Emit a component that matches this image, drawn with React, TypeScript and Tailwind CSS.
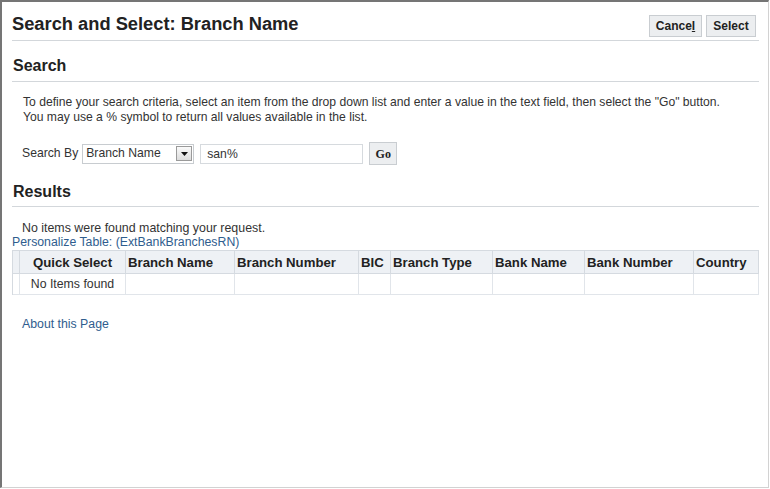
import React from "react";

const cols = [
  { label: "", w: "w-[7px]", center: false },
  { label: "Quick Select", w: "w-[106px]", center: true },
  { label: "Branch Name", w: "w-[109px]", center: false },
  { label: "Branch Number", w: "w-[124px]", center: false },
  { label: "BIC", w: "w-[32px]", center: false },
  { label: "Branch Type", w: "w-[102px]", center: false },
  { label: "Bank Name", w: "w-[92px]", center: false },
  { label: "Bank Number", w: "w-[109px]", center: false },
  { label: "Country", w: "w-[65px]", center: false },
];

export default function App() {
  return (
    <div
      className="w-[769px] h-[488px] bg-white border-t-2 border-l-2 border-t-[#757575] border-l-[#757575] border-r border-b border-r-[#d2d2d2] border-b-[#d2d2d2] pl-[10px] pr-[9px] text-[#333]"
      style={{ fontFamily: '"Liberation Sans", Arial, sans-serif' }}
    >
      {/* Title row */}
      <div className="h-[39px] border-b border-[#d3d7db] flex justify-between items-start">
        <div className="mt-[11px] text-[18.3px] leading-[21px] font-bold text-[#222]">
          Search and Select: Branch Name
        </div>
        <div className="flex gap-[4px] mt-[13px] mr-[3px]">
          <button className="h-[22px] w-[53px] border border-[#c9cdd1] bg-[#eceef0] text-[12px] font-bold text-[#222] leading-[20px]">
            Cance<span className="underline">l</span>
          </button>
          <button className="h-[22px] w-[50px] border border-[#c9cdd1] bg-[#eceef0] text-[12px] font-bold text-[#222] leading-[20px]">
            Select
          </button>
        </div>
      </div>

      {/* Search heading */}
      <div className="h-[41px] border-b border-[#d3d7db] pt-[16px]">
        <div className="text-[16px] leading-[18px] font-bold text-[#222] pl-[1px]">Search</div>
      </div>

      <div className="pl-[11px] pt-[13px] text-[12.15px] leading-[15px] text-[#333]">
        <div>
          To define your search criteria, select an item from the drop down list and enter a value in the text field, then select the "Go" button.
        </div>
        <div>You may use a % symbol to return all values available in the list.</div>
      </div>

      {/* Search by row */}
      <div className="flex items-center pl-[10px] mt-[17px] h-[23px] text-[12.2px]">
        <span className="mr-[4px] text-[#333]">Search By</span>
        <div className="w-[112px] h-[20px] border border-[#c8ccd0] bg-white flex items-center justify-between pl-[3px] pr-[1px]">
          <span className="text-[#333]">Branch Name</span>
          <div className="w-[16px] h-[15px] border border-[#9a9a9a] bg-gradient-to-b from-[#fafafa] to-[#dcdcdc] flex items-center justify-center">
            <svg width="7" height="4" viewBox="0 0 7 4">
              <path d="M0 0 H7 L3.5 4 Z" fill="#111" />
            </svg>
          </div>
        </div>
        <div className="ml-[6px] w-[163px] h-[20px] border border-[#d6dade] bg-white pl-[6px] leading-[18px] text-[#333]">
          san%
        </div>
        <button
          className="ml-[6px] w-[28px] h-[23px] border border-[#c9cdd1] bg-[#eceef0] text-[12px] font-bold text-[#222]"
          style={{ fontFamily: '"Liberation Serif", "Times New Roman", serif' }}
        >
          Go
        </button>
      </div>

      {/* Results heading */}
      <div className="h-[42px] border-b border-[#d3d7db] pt-[18px]">
        <div className="text-[16px] leading-[18px] font-bold text-[#222] pl-[1px]">Results</div>
      </div>

      <div className="mt-[14px] pl-[10px] text-[12.4px] leading-[14px] text-[#333]">
        No items were found matching your request.
      </div>
      <div className="text-[12.3px] leading-[14px] text-[#2f5d8e]">
        Personalize Table: (ExtBankBranchesRN)
      </div>

      {/* Table */}
      <div className="mt-[1px] w-[747px] border-l border-t border-[#d5dae0]">
        <div className="flex">
          {cols.map((c, i) => (
            <div
              key={i}
              className={`${c.w} h-[23px] pt-[2px] border-r border-b border-[#d5dae0] bg-[#eef1f5] text-[13.2px] font-bold text-[#222] flex items-center whitespace-nowrap overflow-hidden ${
                c.center ? "justify-center" : "pl-[2px]"
              }`}
            >
              {c.label}
            </div>
          ))}
        </div>
        <div className="flex">
          {cols.map((c, i) => (
            <div
              key={i}
              className={`${c.w} h-[21px] border-r border-b border-[#e1e5ea] bg-white text-[12.3px] text-[#333] flex items-center justify-center whitespace-nowrap overflow-hidden`}
            >
              {i === 1 ? "No Items found" : ""}
            </div>
          ))}
        </div>
      </div>

      <div className="mt-[22px] pl-[10px] text-[12.3px] leading-[14px] text-[#2f5d8e]">About this Page</div>
    </div>
  );
}
